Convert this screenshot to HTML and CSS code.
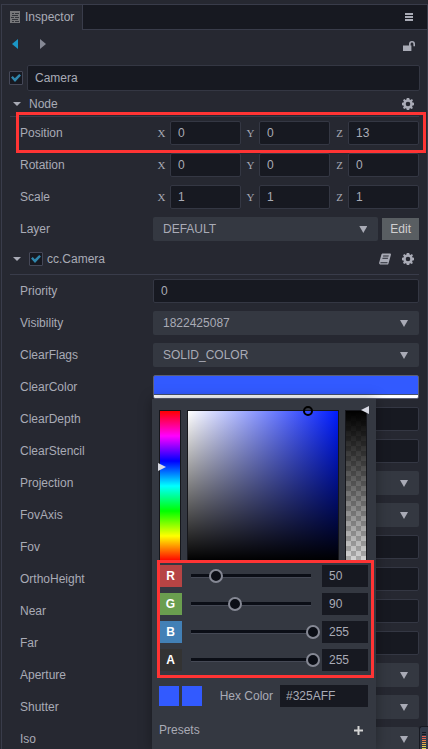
FILE: index.html
```html
<!DOCTYPE html>
<html lang="en">
<head>
<meta charset="utf-8">
<title>Inspector</title>
<link rel="stylesheet" href="styles.css">
</head>
<body>
<svg class="defs" aria-hidden="true">
  <symbol id="gear" viewBox="0 0 12 12">
    <path fill-rule="evenodd" d="M4.800 0h2.400l.4 1.500.9.4L9.900 1.100 11 2.300l-.9 1.300.4.9L12 4.800v2.400l-1.500.400-.4.900.8 1.400L9.700 11l-1.300-.8-.9.300L7.200 12H4.800l-.4-1.500-.9-.3L2.200 11 1 9.800l.8-1.400-.3-.9L0 7.200V4.800l1.500-.3.4-.9L1 2.300 2.300 1l1.300.9.8-.4zM6 3.700a2.300 2.300 0 1 0 0 4.600 2.300 2.300 0 0 0 0-4.600z"/>
  </symbol>
  <symbol id="down" viewBox="0 0 8 4"><path d="M0 0h8L4 4z"/></symbol>
</svg>

<main class="panel">
  <header class="tabs">
    <div class="tab">
      <svg class="tab-icon" viewBox="0 0 10 12"><path fill="#77777a" d="M0 0h10v12H0z"/><path fill="#33353b" d="M2 2h2v1H2zM5 2h4v1H5zM2 4h6v1H2zM1 6h3v1H1zM5 6h4v1H5zM2 8h6v1H2zM2 10h2v1H2zM5 10h4v1H5z"/></svg>
      Inspector
    </div>
    <button class="icon-button menu" aria-label="Menu"><svg width="8" height="8" viewBox="0 0 8 8"><path d="M0 0h8v2H0zM0 3h8v2H0zM0 6h8v2H0z"/></svg></button>
  </header>

  <nav class="toolbar">
    <button class="icon-button back" aria-label="Back"><svg width="6" height="10" viewBox="0 0 6 10"><path d="M6 0v10L0 5z"/></svg></button>
    <button class="icon-button forward" aria-label="Forward"><svg width="6" height="10" viewBox="0 0 6 10"><path d="M0 0v10l6-5z"/></svg></button>
    <button class="icon-button lock" aria-label="Lock"><svg width="12" height="10" viewBox="0 0 12 10"><path d="M0 4.500h6V3a3 3 0 0 1 6 0v2.200h-1.600V3a1.400 1.400 0 0 0-2.800 0v1.500H8.400V10H0z"/></svg></button>
  </nav>

  <div class="name-row">
    <input class="check" type="checkbox" checked aria-label="Node active">
    <input class="field" type="text" value="Camera" aria-label="Node name">
  </div>

  <section>
    <div class="section-head node-head">
      <button class="icon-button" aria-label="Collapse Node"><svg width="8" height="4"><use href="#down"/></svg></button>
      <h2>Node</h2>
      <span class="actions"><button class="icon-button" aria-label="Node settings"><svg width="12" height="12"><use href="#gear"/></svg></button></span>
    </div>
    <div class="rows">
      <div class="row marked">
        <span class="label">Position</span>
        <div class="vector">
          <label>X<input class="field" type="text" value="0"></label>
          <label>Y<input class="field" type="text" value="0"></label>
          <label>Z<input class="field" type="text" value="13"></label>
        </div>
      </div>
      <div class="row">
        <span class="label">Rotation</span>
        <div class="vector">
          <label>X<input class="field" type="text" value="0"></label>
          <label>Y<input class="field" type="text" value="0"></label>
          <label>Z<input class="field" type="text" value="0"></label>
        </div>
      </div>
      <div class="row">
        <span class="label">Scale</span>
        <div class="vector">
          <label>X<input class="field" type="text" value="1"></label>
          <label>Y<input class="field" type="text" value="1"></label>
          <label>Z<input class="field" type="text" value="1"></label>
        </div>
      </div>
      <div class="row">
        <label class="label" for="layer">Layer</label>
        <div class="select"><select id="layer"><option>DEFAULT</option></select></div>
        <button class="edit">Edit</button>
      </div>
    </div>
  </section>

  <section>
    <div class="section-head camera-head">
      <button class="icon-button" aria-label="Collapse cc.Camera"><svg width="8" height="4"><use href="#down"/></svg></button>
      <input class="check" type="checkbox" checked id="camera-on">
      <h2><label for="camera-on">cc.Camera</label></h2>
      <span class="actions">
        <button class="icon-button" aria-label="Help"><svg width="12" height="12" viewBox="0 0 12 12"><path fill-rule="evenodd" d="M3.300.500H11.500L12 1.500 9.500 10.500 9 11.500H1L0 10.300 2.500 1.300zM4.200 2.500 4 3.500h5.500l.3-1zM3.600 4.700l-.3 1h5.500l.3-1zM1.600 9.200l-.3 1h7l.3-1z"/></svg></button>
        <button class="icon-button" aria-label="Camera settings"><svg width="12" height="12"><use href="#gear"/></svg></button>
      </span>
    </div>
    <div class="rows">
      <div class="row"><label class="label" for="priority">Priority</label><input class="field" id="priority" type="text" value="0"></div>
      <div class="row"><label class="label" for="visibility">Visibility</label><div class="select"><select id="visibility"><option>1822425087</option></select></div></div>
      <div class="row"><label class="label" for="flags">ClearFlags</label><div class="select"><select id="flags"><option>SOLID_COLOR</option></select></div></div>
      <div class="row">
        <span class="label">ClearColor</span>
        <div class="color-field">
          <button class="color-button" aria-label="ClearColor"></button>
          <div class="picker">
            <div class="gradients">
              <div class="hue"><svg class="hue-mark" width="8" height="8" viewBox="0 0 8 8"><path d="M0 0l8 4-8 4z"/></svg></div>
              <div class="shade"><span class="shade-mark"></span></div>
              <div class="alpha"><svg class="alpha-mark" width="8" height="8" viewBox="0 0 8 8"><path d="M8 0v8L0 4z"/></svg></div>
            </div>
            <div class="channels">
              <div class="channel"><label class="red" for="r">R</label><input id="r" type="range" max="255" value="50"><input class="value" type="text" value="50" aria-label="Red"></div>
              <div class="channel"><label class="green" for="g">G</label><input id="g" type="range" max="255" value="90"><input class="value" type="text" value="90" aria-label="Green"></div>
              <div class="channel"><label class="blue" for="b">B</label><input id="b" type="range" max="255" value="255"><input class="value" type="text" value="255" aria-label="Blue"></div>
              <div class="channel"><label class="black" for="a">A</label><input id="a" type="range" max="255" value="255"><input class="value" type="text" value="255" aria-label="Alpha"></div>
            </div>
            <div class="hex">
              <span class="swatch"></span><span class="swatch"></span>
              <label for="hex">Hex Color</label>
              <input class="value" id="hex" type="text" value="#325AFF">
            </div>
            <div class="presets">
              <span>Presets</span>
              <button class="icon-button" aria-label="Add preset"><svg width="9" height="9" viewBox="0 0 9 9"><path fill="#d4d4d4" d="M3.500 0h2v3.500H9v2H5.500V9h-2V5.500H0v-2h3.500z"/></svg></button>
            </div>
          </div>
        </div>
      </div>
      <div class="row"><label class="label" for="depth">ClearDepth</label><input class="field" id="depth" type="text"></div>
      <div class="row"><label class="label" for="stencil">ClearStencil</label><input class="field" id="stencil" type="text"></div>
      <div class="row"><label class="label" for="projection">Projection</label><div class="select"><select id="projection"></select></div></div>
      <div class="row"><label class="label" for="axis">FovAxis</label><div class="select"><select id="axis"></select></div></div>
      <div class="row"><label class="label" for="fov">Fov</label><input class="field" id="fov" type="text"></div>
      <div class="row"><label class="label" for="ortho">OrthoHeight</label><input class="field" id="ortho" type="text"></div>
      <div class="row"><label class="label" for="near">Near</label><input class="field" id="near" type="text"></div>
      <div class="row"><label class="label" for="far">Far</label><input class="field" id="far" type="text"></div>
      <div class="row"><label class="label" for="aperture">Aperture</label><div class="select"><select id="aperture"></select></div></div>
      <div class="row"><label class="label" for="shutter">Shutter</label><div class="select"><select id="shutter"></select></div></div>
      <div class="row"><label class="label" for="iso">Iso</label><div class="select"><select id="iso"></select></div></div>
    </div>
  </section>
</main>

<div class="meter" aria-hidden="true"></div>
</body>
</html>
```

FILE: styles.css
```css
* {
  box-sizing: border-box;
}

body {
  margin: 0;
  height: 100vh;
  overflow: hidden;
  background: #262831;
  color: #a9abb6;
  font: 12px/16px "Liberation Sans", Arial, sans-serif;
}

button,
input,
select {
  margin: 0;
  font: inherit;
  color: inherit;
}

.defs {
  position: absolute;
  width: 0;
  height: 0;
}

.panel {
  margin: 4px 0 0 1px;
  border: 1px solid #393c4a;
  border-bottom: 0;
}

.icon-button {
  display: flex;
  padding: 0;
  border: 0;
  background: none;
}

.icon-button svg {
  fill: #a9abb6;
}

/* Tab bar */
.tabs {
  display: flex;
  align-items: stretch;
  justify-content: space-between;
  height: 25px;
  background: linear-gradient(#393c4a, #393c4a) bottom / 100% 1px no-repeat #171921;
}

.tab {
  display: flex;
  align-items: center;
  gap: 5px;
  padding: 0 8px 2px;
  border-right: 1px solid #393c4a;
  background: #262831;
}

.tab-icon {
  width: 10px;
  height: 12px;
}

.menu {
  align-items: center;
  padding: 0 14px 2px 0;
}

.toolbar {
  display: flex;
  align-items: center;
  gap: 22px;
  height: 30px;
  padding: 0 12px 2px 10px;
}

.toolbar .back svg {
  fill: #1b95c4;
}

.toolbar .forward svg {
  fill: #858894;
}

.lock {
  margin: 4px 0 0 auto;
}

/* Fields */
.field {
  flex: 1;
  min-width: 0;
  width: 100%;
  height: 24px;
  padding: 0 7px;
  border: 1px solid #343743;
  border-radius: 2px;
  background: #171921;
}

.name-row {
  display: flex;
  align-items: center;
  gap: 4px;
  margin-top: 5px;
  padding: 0 7px;
}

.name-row .field {
  height: 26px;
}

.check {
  appearance: none;
  flex: none;
  display: grid;
  place-items: center;
  width: 14px;
  height: 14px;
  border: 1px solid #454858;
  border-radius: 1px;
  background: #171921;
}

.check::before {
  content: "";
  width: 10px;
  height: 8px;
  background: #2f86ac;
  clip-path: polygon(0 45%, 18% 25%, 38% 52%, 82% 0, 100% 18%, 40% 100%);
}

/* Sections */
.section-head {
  display: flex;
  align-items: center;
  gap: 8px;
  margin: 0 8px;
  padding: 0 5px 0 3px;
  border-bottom: 1px solid #393c4a;
}

.section-head h2 {
  margin: 0;
  font: inherit;
}

.node-head {
  height: 26px;
}

.camera-head {
  height: 34px;
  padding-top: 3px;
}

.camera-head h2 {
  margin-left: -4px;
}

.actions {
  display: flex;
  gap: 11px;
  margin-left: auto;
}

.rows {
  display: flex;
  flex-direction: column;
  gap: 8px;
  padding: 4px 8px 0 18px;
}

.row {
  position: relative;
  display: flex;
  align-items: center;
  height: 24px;
}

.label {
  flex: none;
  width: 133px;
}

.marked::after {
  content: "";
  position: absolute;
  inset: -9px -7px -8px -4px;
  border: 3px solid #ff3434;
  pointer-events: none;
}

.vector {
  flex: 1;
  display: grid;
  grid-template-columns: repeat(3, 1fr);
  gap: 1px;
}

.vector label {
  display: grid;
  grid-template-columns: 17px 1fr;
  align-items: center;
  padding-bottom: 0;
  font-family: "Liberation Serif", serif;
  font-size: 11px;
  text-align: center;
}

.vector .field {
  font-family: "Liberation Sans", Arial, sans-serif;
  font-size: 12px;
  text-align: left;
}

.select {
  flex: 1;
  position: relative;
  height: 24px;
}

.select select {
  appearance: none;
  width: 100%;
  height: 24px;
  padding: 0 10px;
  border: 0;
  border-radius: 2px;
  background: #343841;
}

.select::after {
  content: "";
  position: absolute;
  top: 9px;
  right: 11px;
  width: 8px;
  height: 7px;
  background: #a9abb6;
  clip-path: polygon(0 0, 100% 0, 50% 100%);
  pointer-events: none;
}

.edit {
  height: 22px;
  margin-left: 4px;
  padding: 0 8px;
  border: 0;
  background: #595e62;
  color: #d0d0d0;
}

/* Color picker */
.color-field {
  flex: 1;
  position: relative;
  z-index: 2;
  height: 24px;
}

.color-button {
  display: block;
  width: 100%;
  height: 24px;
  border: 1px solid #5b5f75;
  border-radius: 2px;
  background: linear-gradient(#325aff 18px, #44506f 18px, #44506f 19px, #fff 19px);
}

.picker {
  position: absolute;
  top: 24px;
  left: -1px;
  width: 224px;
  padding: 11px 8px 11px 7px;
  background: #343841;
  box-shadow: 0 0 12px rgba(0, 0, 0, 0.35);
}

.gradients {
  display: grid;
  grid-template-columns: 22px 1fr 22px;
  gap: 6px;
  height: 152px;
  margin-right: 1px;
}

.gradients > div {
  position: relative;
  border: 1px solid #16171c;
}

.gradients svg {
  position: absolute;
  fill: #d8dae4;
}

.hue {
  background: linear-gradient(#f00, #f0f, #00f, #0ff, #0f0, #ff0, #f00);
}

.gradients .hue-mark {
  top: 52px;
  left: -2px;
}

.shade {
  background: linear-gradient(transparent, #000), linear-gradient(90deg, #fff, #001cff);
}

.shade-mark {
  position: absolute;
  top: -5px;
  right: 25px;
  width: 10px;
  height: 10px;
  border: 2px solid #000;
  border-radius: 50%;
}

.alpha {
  background:
    linear-gradient(#000, transparent),
    conic-gradient(#aaa 25%, #d4d4d4 0 50%, #aaa 0 75%, #d4d4d4 0) 0 0 / 10px 10px;
}

.gradients .alpha-mark {
  top: -5px;
  right: -3px;
}

.channels {
  position: relative;
  display: grid;
  gap: 6px;
  padding: 3px 0 11px;
}

.channels::after {
  content: "";
  position: absolute;
  inset: -2px -6px 4px -2px;
  border: 3px solid #ff3434;
  pointer-events: none;
}

.channel {
  display: flex;
  align-items: center;
  height: 22px;
}

.channel label {
  flex: none;
  width: 23px;
  color: #fff;
  font-weight: 700;
  line-height: 22px;
  text-align: center;
}

.red {
  background: #b64444;
}

.green {
  background: #6a9e4f;
}

.blue {
  background: #4280b6;
}

.black {
  background: #333;
}

.channel input[type="range"] {
  appearance: none;
  flex: 1;
  min-width: 0;
  height: 14px;
  margin: 0 2px 0 3px;
  background: linear-gradient(#0b0e16 3px, #454955 3px) 6px 5px / 120px 4px no-repeat;
}

.channel input[type="range"]::-webkit-slider-thumb {
  appearance: none;
  width: 14px;
  height: 14px;
  border: 2px solid #858894;
  border-radius: 50%;
  background: #0b0e16;
}

.value {
  width: 46px;
  height: 22px;
  padding: 0 7px;
  border: 0;
  background: #171921;
}

.hex {
  display: flex;
  align-items: center;
  gap: 3px;
  margin-top: 3px;
}

.swatch {
  width: 20px;
  height: 20px;
  background: #325aff;
}

.hex label {
  margin-left: auto;
}

.hex .value {
  width: 88px;
  margin-left: 4px;
  padding: 0 6px;
}

.presets {
  display: flex;
  align-items: center;
  justify-content: space-between;
  margin-top: 15px;
  padding-right: 5px;
}

/* Level meter at the window corner */
.meter {
  position: absolute;
  right: 0;
  bottom: 0;
  z-index: 3;
  width: 9px;
  height: 23px;
  border: solid #171921;
  border-width: 1px 0 0 1px;
  border-radius: 3px 0 0 0;
  background:
    repeating-linear-gradient(transparent 0 1px, #343b4a 1px 2px) 2px 5px / 5px 18px no-repeat,
    linear-gradient(#171921 4px, #e3604f 4px 7px, #e89a4a 10px, #e6d84c 15px) 2px 5px / 4px 18px no-repeat,
    #343b4a;
}
```
